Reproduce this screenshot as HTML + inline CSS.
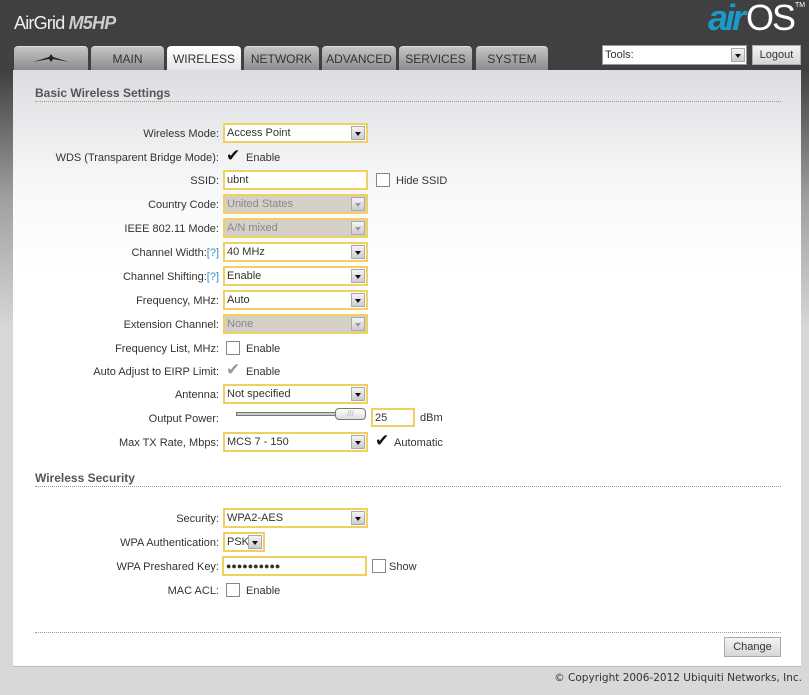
<!DOCTYPE html>
<html><head><style>
*{margin:0;padding:0;box-sizing:border-box}
body{width:809px;height:695px;overflow:hidden;font-family:"Liberation Sans",Arial,sans-serif;font-size:11px;color:#333;
background:linear-gradient(#404040 0,#404040 70px,#a0a0a0 200px,#d8d8d8 330px,#d8d8d8 100%);position:relative}
.abs{position:absolute}
.tab{position:absolute;top:46px;height:24px;border-radius:4px 4px 0 0;background:linear-gradient(#c4c4c4,#8c8c8c);color:#333;font-size:12px;text-align:center;line-height:24px;border-top:1px solid #ddd}
.tab.on{background:linear-gradient(#fff,#e4e5e8);border-top:1px solid #fff}
#panel{position:absolute;left:13px;top:70px;width:788px;height:597px;background:linear-gradient(#dcdde0 0,#f6f7f8 110px,#fff 200px,#fff);border-bottom:1px solid #bbb}
.h{position:absolute;left:35px;font-size:12px;font-weight:bold;color:#555}
.dot{position:absolute;left:35px;width:746px;border-top:1px dotted #999}
.lbl{position:absolute;right:590px;text-align:right;white-space:nowrap;line-height:14px}
.sel{position:absolute;left:223px;width:145px;height:20px;border:2px solid #f0d060;background:#fff;padding-left:2px;line-height:16px}
.sel.dis{background:#d4d0c8;color:#888}
.arr{position:absolute;right:1px;top:1px;width:14px;height:14px;background:linear-gradient(#f4f4f4,#ccc);border:1px solid #aaa}
.arr:after{content:"";position:absolute;left:3px;top:5px;border-left:3px solid transparent;border-right:3px solid transparent;border-top:4px solid #111}
.dis .arr:after{border-top-color:#999}
.cb{position:absolute;width:14px;height:14px;border:1px solid #888;background:#fff}
.ck{position:absolute;font-size:17px;line-height:14px;color:#111}
.t{position:absolute;white-space:nowrap;line-height:14px}
.q{color:#3a8ec8}
</style></head><body>
<div class="abs" style="left:14px;top:13px;color:#eee;font-size:18px;letter-spacing:-0.8px">AirGrid <b style="font-style:italic;color:#ccc">M5HP</b></div>
<div class="abs" style="left:708px;top:-2px;font-size:36px;line-height:40px;font-style:italic;font-weight:bold;color:#1a9ac8;letter-spacing:-3px">air<span style="color:#fff;font-style:normal;font-weight:normal;letter-spacing:-2px;margin-left:3px">OS</span></div>
<div class="abs" style="left:795px;top:2px;color:#fff;font-size:7px">TM</div>
<div class="tab" style="left:14px;width:74px"><svg width="40" height="12" viewBox="0 0 40 12" style="margin-top:6px"><path d="M2 9 L18 4 L20 1 L22 4 L38 9 L22 6 L20 9 L18 6 Z" fill="#222"/></svg></div>
<div class="tab" style="left:91px;width:73px">MAIN</div>
<div class="tab on" style="left:167px;width:74px">WIRELESS</div>
<div class="tab" style="left:244px;width:75px">NETWORK</div>
<div class="tab" style="left:322px;width:74px">ADVANCED</div>
<div class="tab" style="left:399px;width:73px">SERVICES</div>
<div class="tab" style="left:476px;width:72px">SYSTEM</div>
<div class="abs" style="left:602px;top:45px;width:145px;height:20px;background:#fff;border:1px solid #999;padding-left:2px;line-height:18px">Tools:<div class="arr" style="top:2px"></div></div>
<div class="abs" style="left:752px;top:45px;width:49px;height:20px;background:linear-gradient(#f4f4f4,#d6d6d6);border:1px solid #aaa;text-align:center;line-height:18px;font-size:11px">Logout</div>
<div id="panel"></div>
<div class="h" style="top:86px">Basic Wireless Settings</div>
<div class="dot" style="top:101px"></div>

<div class="lbl" style="top:127px">Wireless Mode:</div><div class="sel" style="top:123px">Access Point<div class="arr"></div></div>
<div class="lbl" style="top:151px">WDS (Transparent Bridge Mode):</div><div class="ck" style="left:226px;top:149px">✔</div><div class="t" style="left:246px;top:151px">Enable</div>
<div class="lbl" style="top:174px">SSID:</div><div class="sel" style="top:170px;width:145px">ubnt</div><div class="cb" style="left:376px;top:173px"></div><div class="t" style="left:396px;top:174px">Hide SSID</div>
<div class="lbl" style="top:198px">Country Code:</div><div class="sel dis" style="top:194px">United States<div class="arr"></div></div>
<div class="lbl" style="top:222px">IEEE 802.11 Mode:</div><div class="sel dis" style="top:218px">A/N mixed<div class="arr"></div></div>
<div class="lbl" style="top:246px">Channel Width:<span class="q">[?]</span></div><div class="sel" style="top:242px">40 MHz<div class="arr"></div></div>
<div class="lbl" style="top:270px">Channel Shifting:<span class="q">[?]</span></div><div class="sel" style="top:266px">Enable<div class="arr"></div></div>
<div class="lbl" style="top:294px">Frequency, MHz:</div><div class="sel" style="top:290px">Auto<div class="arr"></div></div>
<div class="lbl" style="top:318px">Extension Channel:</div><div class="sel dis" style="top:314px">None<div class="arr"></div></div>
<div class="lbl" style="top:342px">Frequency List, MHz:</div><div class="cb" style="left:226px;top:341px"></div><div class="t" style="left:246px;top:342px">Enable</div>
<div class="lbl" style="top:365px">Auto Adjust to EIRP Limit:</div><div class="ck" style="left:226px;top:363px;color:#999">✔</div><div class="t" style="left:246px;top:365px">Enable</div>
<div class="lbl" style="top:388px">Antenna:</div><div class="sel" style="top:384px">Not specified<div class="arr"></div></div>
<div class="lbl" style="top:412px">Output Power:</div>
<div class="abs" style="left:236px;top:412px;width:105px;height:4px;border:1px solid #777;background:#ccc"></div>
<div class="abs" style="left:335px;top:408px;width:31px;height:12px;border:1px solid #777;border-radius:4px;background:linear-gradient(#fff,#ddd);font-size:8px;color:#aaa;text-align:center;line-height:10px">///</div>
<div class="sel" style="left:371px;top:408px;width:44px;height:19px">25</div><div class="t" style="left:420px;top:411px">dBm</div>
<div class="lbl" style="top:436px">Max TX Rate, Mbps:</div><div class="sel" style="top:432px">MCS 7 - 150<div class="arr"></div></div>
<div class="ck" style="left:375px;top:434px">✔</div><div class="t" style="left:394px;top:436px">Automatic</div>

<div class="h" style="top:471px">Wireless Security</div>
<div class="dot" style="top:486px"></div>
<div class="lbl" style="top:512px">Security:</div><div class="sel" style="top:508px">WPA2-AES<div class="arr"></div></div>
<div class="lbl" style="top:536px">WPA Authentication:</div><div class="sel" style="top:532px;width:42px">PSK<div class="arr"></div></div>
<div class="lbl" style="top:560px">WPA Preshared Key:</div><div class="sel" style="top:556px;left:222px;width:145px;font-size:9px">●●●●●●●●●●</div>
<div class="cb" style="left:372px;top:559px"></div><div class="t" style="left:389px;top:560px">Show</div>
<div class="lbl" style="top:584px">MAC ACL:</div><div class="cb" style="left:226px;top:583px"></div><div class="t" style="left:246px;top:584px">Enable</div>

<div class="dot" style="top:632px"></div>
<div class="abs" style="left:724px;top:637px;width:57px;height:20px;background:linear-gradient(#f4f4f4,#d6d6d6);border:1px solid #aaa;text-align:center;line-height:18px">Change</div>
<div class="abs" style="right:7px;top:672px;font-family:'DejaVu Sans',sans-serif;font-size:10.5px;color:#333">© Copyright 2006-2012 Ubiquiti Networks, Inc.</div>
</body></html>
